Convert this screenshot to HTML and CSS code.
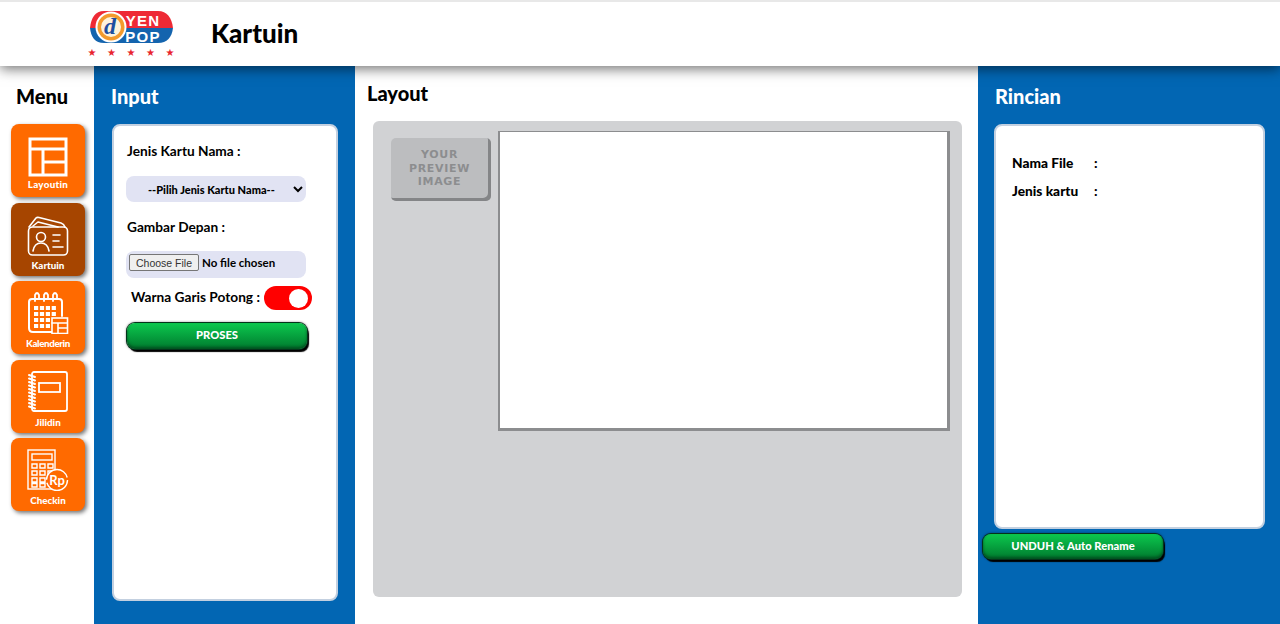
FILE: index.html
```html
<!DOCTYPE html>
<html>
<head>
  <title>Kartuin</title>
  <link rel="stylesheet" href="styles.css">
</head>
<body>

<header>
  <svg class="logo" width="90" height="60" viewBox="0 0 90 60">
    <path d="M18 8 H72 C81 8 86 15 87 25 H4 C5 15 9 8 18 8 Z" fill="#ee2a35"/>
    <path d="M4 25 H87 C86 34 81 40 72 40 H18 C9 40 5 34 4 25 Z" fill="#1464ae"/>
    <circle cx="25" cy="24" r="15.500" fill="#fff"/>
    <circle cx="25" cy="24" r="13.500" fill="#f39a2d"/>
    <circle cx="25" cy="24" r="10" fill="#fdf3dc"/>
    <text x="24" y="31" class="logo-d">d</text>
    <text x="57" y="22.500" class="logo-yen">YEN</text>
    <text x="57" y="39" class="logo-pop">POP</text>
    <g fill="#e8242e" class="stars">
      <text x="6" y="53">★</text>
      <text x="25.500" y="53">★</text>
      <text x="45" y="53">★</text>
      <text x="64.500" y="53">★</text>
      <text x="84" y="53">★</text>
    </g>
  </svg>
  <h1>Kartuin</h1>
</header>

<div class="main">

  <!-- Menu -->
  <nav class="menu">
    <h2>Menu</h2>
    <a class="tile tile-layout">
      <svg viewBox="0 0 40 40" width="40" height="40" fill="none" stroke="#fff" stroke-width="3">
        <rect x="2" y="2" width="36" height="36"/>
        <path d="M2 12 H38 M15 12 V38 M15 25 H38"/>
      </svg>
      <span>Layoutin</span>
    </a>
    <a class="tile active">
      <svg viewBox="0 0 42 42" width="42" height="42" fill="none" stroke="#fff" stroke-width="1.600" stroke-linecap="round" stroke-linejoin="round">
        <path d="M2 13 L9 4 Q10 3 12 3.500 L34 9 Q37 10 38 13"/>
        <path d="M6 12 L11 8 L31 13"/>
        <rect x="1.500" y="13" width="39" height="28" rx="4"/>
        <circle cx="14" cy="23" r="4.500"/>
        <path d="M6 37 C7 31 10 29 14 29 C18 29 21 31 22 37"/>
        <path d="M26 21 H33 M26 27 H32 M26 33 H36"/>
      </svg>
      <span>Kartuin</span>
    </a>
    <a class="tile">
      <svg viewBox="0 0 42 42" width="42" height="42" fill="none" stroke="#fff" stroke-width="2" stroke-linecap="round">
        <path d="M26 40 H6 Q2 40 2 36 V10 Q2 7 5 7 H32 Q35 7 35 10 V24"/>
        <path d="M8 9 V3 Q10 -1 12 3 V7 M17 9 V3 Q19 -1 21 3 V7 M26 9 V3 Q28 -1 30 3 V7" stroke-width="1.800"/>
        <path d="M7 16 H30 M7 22 H30 M7 28 H24 M7 34 H24" stroke-width="4.200" stroke-dasharray="4.200 1.700" stroke-linecap="butt"/>
        <rect x="25" y="26" width="15.500" height="15.500" fill="#ff6a00" stroke-width="1.600"/>
        <path d="M25 31 H40 M31 31 V41 M31 36 H40" stroke-width="1.600"/>
      </svg>
      <span class="tight">Kalenderin</span>
    </a>
    <a class="tile">
      <svg viewBox="0 0 42 42" width="42" height="42" fill="none" stroke="#fff" stroke-width="1.800" stroke-linecap="round">
        <rect x="5" y="1" width="35" height="39" rx="2"/>
        <rect x="12" y="12" width="21" height="9"/>
        <path d="M2 4 L8 6 M2 7.500 L8 9.500 M2 11 L8 13 M2 14.500 L8 16.500 M2 18 L8 20 M2 21.500 L8 23.500 M2 25 L8 27 M2 28.500 L8 30.500 M2 32 L8 34 M2 35.500 L8 37.500" stroke-width="2"/>
      </svg>
      <span>Jilidin</span>
    </a>
    <a class="tile">
      <svg viewBox="0 0 42 42" width="42" height="42" fill="none" stroke="#fff" stroke-width="1.400">
        <rect x="1" y="1" width="27" height="39"/>
        <rect x="5" y="5" width="20" height="6"/>
        <path d="M5 15 H10 V19 H5 Z M13 15 H18 V19 H13 Z M21 15 H26 V19 H21 Z M5 22 H10 V26 H5 Z M13 22 H18 V26 H13 Z M21 22 H26 V26 H21 Z M5 29 H10 V33 H5 Z M13 29 H18 V33 H13 Z M5 34.500 H10 V38 H5 Z M13 34.500 H18 V38 H13 Z"/>
        <circle cx="30" cy="31" r="10.500" fill="#ff6a00" stroke-dasharray="30 3"/>
        <text x="30" y="35.500" class="rp">Rp</text>
      </svg>
      <span>Checkin</span>
    </a>
  </nav>

  <!-- Input -->
  <section class="col-input">
    <h2>Input</h2>
    <div class="card input-card">
      <label class="field-label">Jenis Kartu Nama :</label>
      <select class="field-select">
        <option>--Pilih Jenis Kartu Nama--</option>
      </select>
      <label class="field-label">Gambar Depan :</label>
      <div class="file-box"><input type="file"></div>
      <div class="toggle-row">
        <span class="toggle-label">Warna Garis Potong :</span>
        <span class="toggle"><span class="knob"></span></span>
      </div>
      <button class="green-button proses">PROSES</button>
    </div>
  </section>

  <!-- Layout -->
  <section class="col-layout">
    <h2>Layout</h2>
    <div class="panel">
      <div class="thumb">YOUR<br>PREVIEW<br>IMAGE</div>
      <div class="sheet"></div>
    </div>
  </section>

  <!-- Rincian -->
  <section class="col-rincian">
    <h2>Rincian</h2>
    <div class="card rincian-card">
      <div class="info-row"><b>Nama File</b><b>:</b></div>
      <div class="info-row"><b>Jenis kartu</b><b>:</b></div>
    </div>
    <button class="green-button unduh">UNDUH &amp; Auto Rename</button>
  </section>

</div>

</body>
</html>
```

FILE: styles.css
```css
* { box-sizing: border-box; }

html, body {
  height: 100%;
}

body {
  margin: 0;
  font-family: Lato, "Open Sans", sans-serif;
  font-weight: 700;
  color: #000;
  background: #fff;
  overflow: hidden;
}

header {
  position: relative;
  z-index: 2;
  display: flex;
  align-items: center;
  height: 66px;
  padding-left: 86px;
  background: #fff;
  border-top: 2px solid #e8e8e8;
  box-shadow: 0 3px 12px rgba(0,0,0,0.55);
}

.logo { margin-top: -2px; }

.logo-d {
  font-family: "Liberation Serif", serif;
  font-size: 24px;
  font-style: italic;
  fill: #1f4fa0;
  text-anchor: middle;
}

.logo-yen, .logo-pop {
  font-family: "Liberation Sans", sans-serif;
  font-size: 15px;
  font-weight: 700;
  fill: #fff;
  text-anchor: middle;
  letter-spacing: 1.200px;
}

.stars text {
  font-family: "DejaVu Sans", sans-serif;
  font-size: 10px;
  text-anchor: middle;
}

.rp {
  font-family: Lato, sans-serif;
  font-size: 13px;
  font-weight: 700;
  fill: #fff;
  stroke: none;
  text-anchor: middle;
}

h1 {
  margin: -2px 0 0 35px;
  font-size: 26px;
  font-weight: 900;
}

h2 {
  margin: 0;
  font-size: 20px;
  font-weight: 900;
}

.main {
  display: flex;
  height: 558px;
}

/* Menu */
.menu {
  width: 94px;
  flex-shrink: 0;
  padding: 18px 9px 0 11px;
}

.menu h2 {
  margin: 0 0 16px 5px;
  line-height: 24px;
}

.tile {
  display: flex;
  flex-direction: column;
  align-items: center;
  justify-content: flex-end;
  height: 73px;
  margin-bottom: 5.500px;
  padding-bottom: 5px;
  border-radius: 8px;
  background: #ff6a00;
  color: #fff;
  font-size: 9.800px;
  font-weight: 900;
  box-shadow: 2px 2px 4px rgba(0,0,0,0.55);
}

.tile.active { background: #a64500; }

.tile span { margin-top: 3px; line-height: 12px; }

.tile .tight { letter-spacing: -0.4px; }

.tile-layout { padding-bottom: 7px; }

.tile-layout span { margin-top: 1px; letter-spacing: 0.3px; }

/* Blue columns */
.col-input, .col-rincian {
  background: #0266b3;
  color: #fff;
}

.col-input {
  width: 261px;
  flex-shrink: 0;
  padding: 18px 17px 0 18px;
}

.col-input h2, .col-rincian h2 {
  line-height: 24px;
  margin-bottom: 16px;
}

.col-input h2 { margin-left: -1px; }

.card {
  background: #fff;
  color: #000;
  border: 2px solid #c3d0e0;
  border-radius: 8px;
}

.input-card {
  height: 477px;
  padding: 0 12px;
  font-size: 13.700px;
}

.field-label {
  display: block;
  margin: 16px 0 0 1px;
  line-height: 17px;
}

.field-select {
  display: block;
  width: 180px;
  height: 26px;
  margin-top: 17px;
  padding: 0 0 0 18px;
  border: none;
  border-radius: 8px;
  background: #e1e3f3;
  font-family: Lato, sans-serif;
  font-size: 11px;
  font-weight: 900;
  color: #000;
}

.file-box {
  width: 180px;
  height: 27px;
  margin-top: 16px;
  padding: 3px 0 0 3px;
  border-radius: 8px;
  background: #e1e3f3;
}

.file-box input {
  display: block;
  width: 176px;
  font-family: Lato, sans-serif;
  font-size: 11.500px;
  font-weight: 700;
}

.file-box input::file-selector-button {
  height: 17px;
  margin-right: 3px;
  padding: 0 6px;
  border: 1px solid #767676;
  border-radius: 2px;
  background: #efefef;
  font-family: "Liberation Sans", sans-serif;
  font-size: 10.500px;
  font-weight: 400;
  color: #333;
}

.toggle-row {
  display: flex;
  align-items: center;
  justify-content: space-between;
  width: 182px;
  height: 24px;
  margin: 8px 0 0 4px;
  padding-left: 1px;
}

.toggle-label { padding-bottom: 3px; }

.toggle {
  display: flex;
  align-items: center;
  justify-content: flex-end;
  width: 48px;
  height: 24px;
  padding-right: 4px;
  border-radius: 12px;
  background: #ff0000;
}

.knob {
  width: 19px;
  height: 19px;
  border-radius: 50%;
  background: #fff;
}

.green-button {
  display: block;
  border: none;
  border-radius: 8px;
  background: linear-gradient(#0cc84e, #007a2e);
  color: #fff;
  font-family: Lato, sans-serif;
  font-weight: 900;
  font-size: 11.200px;
  box-shadow: inset 0 -2px 3px #00501f, 0 0 0 1px #04331a, 2px 3px 1px #000, 0 0 3px #000;
}

.proses {
  width: 180px;
  height: 26px;
  margin: 13px 0 0 1px;
  padding-bottom: 5px;
}

/* Layout */
.col-layout {
  flex: 1;
  min-width: 0;
  padding: 15px 16px 0 12px;
}

.col-layout h2 { line-height: 24px; }

.panel {
  display: flex;
  align-items: flex-start;
  gap: 7px;
  width: 589px;
  height: 476px;
  margin: 16px 0 0 6px;
  padding: 10px 0 0 18px;
  border-radius: 6px;
  background: #d1d2d4;
}

.thumb {
  width: 100px;
  height: 63px;
  margin-top: 7px;
  padding: 10px 3px 0 0;
  border-radius: 5px;
  background: #bcbdbf;
  box-shadow: inset -3px -3px 0 #848587;
  color: #8c8d8f;
  font-family: "DejaVu Sans", sans-serif;
  font-size: 11px;
  font-weight: 700;
  letter-spacing: 0.700px;
  line-height: 13.500px;
  text-align: center;
}

.sheet {
  width: 452px;
  height: 300px;
  background: #fff;
  border-style: solid;
  border-color: #8c8d8f;
  border-width: 1px 3px 3px 2px;
}

/* Rincian */
.col-rincian {
  position: relative;
  width: 302px;
  flex-shrink: 0;
  padding: 18px 15px 0 17px;
}

.rincian-card {
  width: 271px;
  height: 405px;
  margin-left: -1px;
  padding-top: 24px;
  font-size: 13.700px;
}

.info-row {
  display: flex;
  height: 28px;
  padding-left: 16px;
  line-height: 26px;
}

.info-row b:first-child { width: 82px; }

.unduh {
  width: 180px;
  height: 25px;
  margin: 5px 0 0 -12px;
  padding-bottom: 4px;
}
```
